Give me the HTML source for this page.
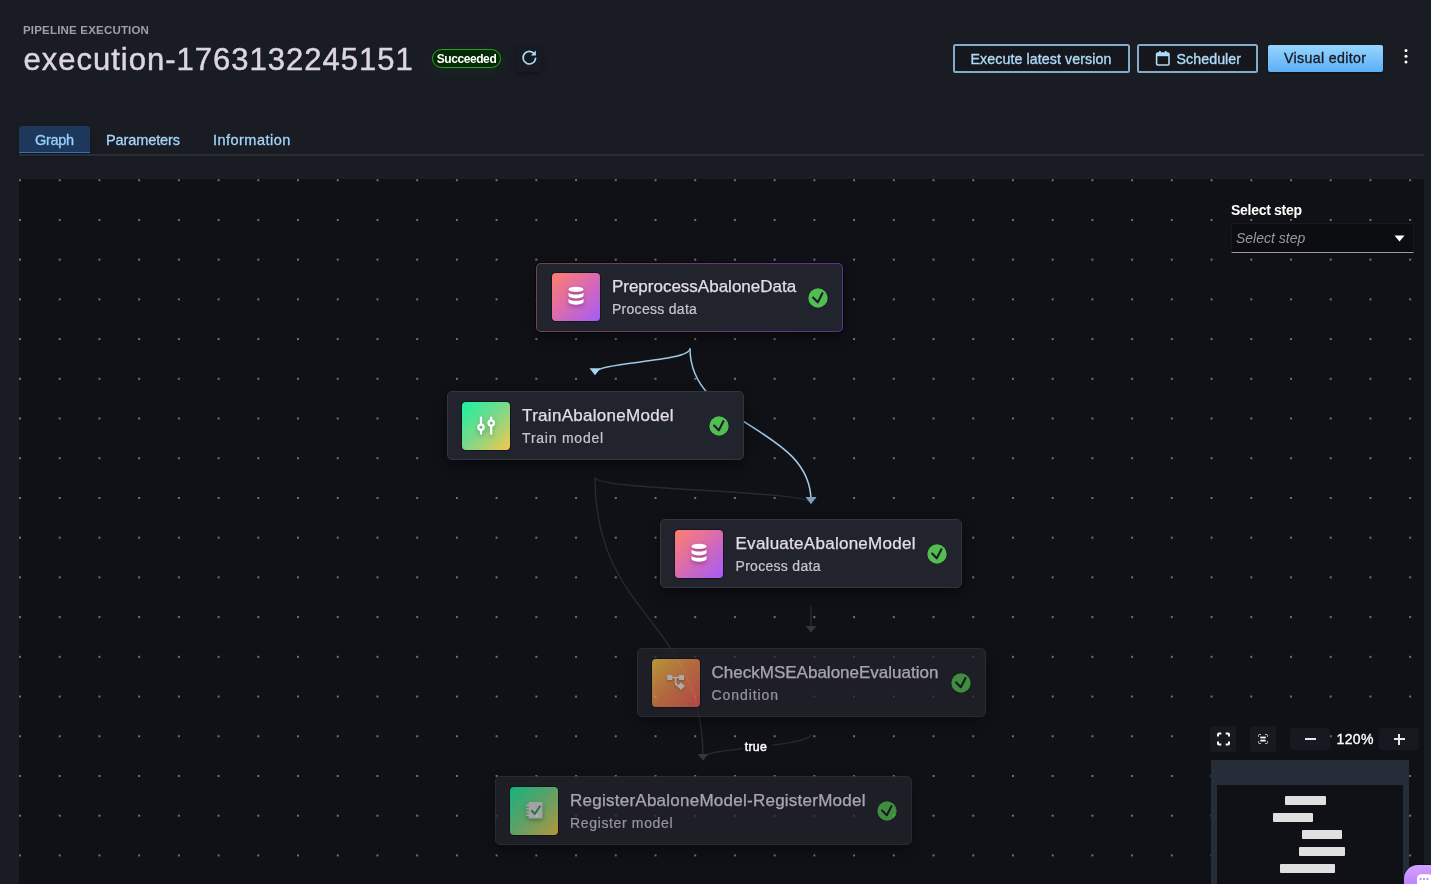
<!DOCTYPE html>
<html>
<head>
<meta charset="utf-8">
<title>Pipeline execution</title>
<style>
*{box-sizing:border-box;margin:0;padding:0}
html,body{width:1431px;height:884px;overflow:hidden;background:#1a1c24;font-family:"Liberation Sans",sans-serif;}
.abs{position:absolute}
#root{will-change:transform;position:relative;width:1431px;height:884px;overflow:hidden;background:#1a1c24}
.eyebrow{left:23px;top:22.5px;font-size:11.5px;font-weight:bold;color:#a29daa;letter-spacing:.19px;line-height:14px;white-space:nowrap}
.title{left:23.5px;top:41px;font-size:31px;line-height:38px;color:#dcd6e3;white-space:nowrap;letter-spacing:1.0px;-webkit-text-stroke:.45px #dcd6e3}
.badge{left:432px;top:49px;width:69px;height:19px;border:1.800px solid #2f9e2f;border-radius:10px;background:#032b03;color:#fff;font-size:12px;letter-spacing:-.42px;font-weight:bold;line-height:16px;padding-top:1.200px;text-align:center;box-shadow:0 4px 14px rgba(20,90,20,.18)}
.refresh{left:516px;top:47px;width:26px;height:25px;background:#181a21;border-radius:3px;box-shadow:0 2px 4px rgba(0,0,0,.35)}
.btn{top:44px;height:29px;border:2px solid #84abc9;border-radius:2.5px;background:#15171d;color:#addaf8;font-size:14.2px;line-height:26px;white-space:nowrap;-webkit-text-stroke:.35px #addaf8}
.btn span{position:absolute;top:0.2px}
.btnp{left:1268px;top:45px;width:114.500px;height:26.500px;border-radius:2px;background:linear-gradient(#96d5ff,#5cb0f5);color:#14171d;-webkit-text-stroke:.3px #14171d;font-size:14.2px;line-height:26px;white-space:nowrap;box-shadow:0 1px 2px rgba(0,0,0,.5)}
.tab{top:126px;height:28px;font-size:14.500px;line-height:28px;color:#a4d6fb;white-space:nowrap;-webkit-text-stroke:.3px #a4d6fb}
.tabline{left:19px;top:154.400px;width:1405px;height:1.600px;background:#2b2d34}
#canvas{left:19px;top:179px;width:1405px;height:705px;background-color:#101116;overflow:hidden;
 background-image:radial-gradient(circle,#8a8893 0,#8a8893 .6px,rgba(138,136,147,0) 1.1px);
 background-size:39.72px 39.72px;background-position:-18.86px -18.66px}
.node{position:absolute;height:69px;border:1.400px solid #33353f;border-radius:5px;background:#22242d;box-shadow:0 6px 14px rgba(0,0,0,.45)}
.node .ic{position:absolute;left:14.400px;top:9.600px;width:48px;height:48px;border-radius:4px;box-shadow:0 0 0 1px rgba(10,12,18,.55)}
.node .t{position:absolute;left:74.500px;top:12.400px;font-size:17px;line-height:22px;color:#e2dde8;white-space:nowrap;-webkit-text-stroke:.25px #e2dde8}
.node .s{position:absolute;left:74.500px;top:36.500px;font-size:14px;line-height:18px;color:#c9c5d0;white-space:nowrap;letter-spacing:.3px;-webkit-text-stroke:.2px #c9c5d0}
.node .ck{position:absolute;top:24.100px;width:20px;height:20px}
.dim{opacity:.72}
.g-proc{background:linear-gradient(135deg,#ff7f6d 0%,#dd6cab 45%,#a35bfa 100%)}
.g-train{background:linear-gradient(135deg,#17f2a3 0%,#7ed888 50%,#f6c84a 100%)}
.g-cond{background:linear-gradient(135deg,#f7c948 0%,#f08a4e 50%,#ee5a5a 100%)}
.mm{height:9px;background:#e0e0e0;border-radius:1px}
</style>
</head>
<body>
<div id="root">
  <div class="abs eyebrow">PIPELINE EXECUTION</div>
  <div class="abs title">execution-1763132245151</div>
  <div class="abs badge">Succeeded</div>
  <div class="abs refresh">
    <svg style="position:absolute;left:0;top:-.7px" width="26" height="25" viewBox="0 0 26 25"><path d="M18.6 8.2 A6.3 6.3 0 1 0 19.6 12.4" fill="none" stroke="#a9d9fa" stroke-width="1.7" stroke-linecap="round"/><path d="M19.9 4.6 L19.9 9.6 L14.9 9.6 Z" fill="#a9d9fa"/></svg>
  </div>

  <div class="abs btn" style="left:953px;width:177px"><span style="left:15.500px;letter-spacing:.1px">Execute latest version</span></div>
  <div class="abs btn" style="left:1137px;width:121px">
    <svg class="abs" style="left:16px;top:3.500px" width="16" height="17" viewBox="0 0 16 17"><rect x="1.6" y="3" width="12.4" height="12" rx="1.2" fill="none" stroke="#addaf8" stroke-width="1.6"/><rect x="1.6" y="3" width="12.4" height="3.2" fill="#addaf8"/><rect x="4" y="1" width="1.8" height="3" fill="#addaf8"/><rect x="9.8" y="1" width="1.8" height="3" fill="#addaf8"/></svg>
    <span style="left:37.500px;letter-spacing:.08px">Scheduler</span></div>
  <div class="abs btnp"><span class="abs" style="left:16px;top:.4px;letter-spacing:.34px">Visual editor</span></div>
  <svg class="abs" style="left:1402px;top:46.500px" width="8" height="18" viewBox="0 0 8 18"><circle cx="4" cy="3.4" r="1.5" fill="#fff"/><circle cx="4" cy="9.2" r="1.5" fill="#fff"/><circle cx="4" cy="15" r="1.5" fill="#fff"/></svg>

  <div class="abs" style="left:19px;top:125.700px;width:71px;height:27.600px;background:#1d385a;border-bottom:1.600px solid #2f72b8;border-radius:3px 3px 0 0;box-shadow:0 3px 6px rgba(0,0,0,.25)"></div>
  <div class="abs tab" style="left:35px;letter-spacing:-.33px;color:#98d2fd;-webkit-text-stroke:.3px #98d2fd">Graph</div>
  <div class="abs tab" style="left:106px;letter-spacing:-.1px">Parameters</div>
  <div class="abs tab" style="left:213px;letter-spacing:.47px">Information</div>
  <div class="abs tabline"></div>

  <div class="abs" id="canvas">
    <svg class="abs" style="left:0;top:0" width="1405" height="705" viewBox="19 179 1405 705" fill="none">
      <g stroke="#272932" stroke-width="1.400">
        <path d="M595,477.5 C595,490.5 811,490.5 811,503"/>
        <path d="M595,477.5 C595,619 703,619 703,758"/>
        <path d="M811,605.5 L811,628"/>
        <path d="M811,734 C811,747.2 703,747.2 703,758"/>
      </g>
      <g fill="#343641">
        <path d="M697.5,754 L708.5,754 L703,760.5 Z"/>
        <path d="M805.5,626 L816.5,626 L811,632.5 Z"/>
      </g>
      <g stroke="#9dc9e6" stroke-width="1.5">
        <path d="M690,348.400 C690,362 595,362 595,373"/>
        <path d="M690,348.400 C690,426.200 811,426.200 811,501"/>
      </g>
      <path d="M589.500,368.300 L600.500,368.300 L595,375.200 Z" fill="#a6d4f2"/>
      <path d="M805.500,497 L816.500,497 L811,504.200 Z" fill="#7f9fb8"/>
    </svg>
    <div class="abs" style="left:724px;top:559.600px;width:28.500px;height:16px;background:#101116;color:#fff;font-size:12.300px;-webkit-text-stroke:.45px #fff;letter-spacing:.25px;line-height:16px;padding-left:1.800px">true</div>
    <div class="node" style="left:517.400px;top:83.800px;width:306.600px;border:1.400px solid transparent;background:linear-gradient(#22242d,#22242d) padding-box,linear-gradient(100deg,#7a4243,#6a3a6e 55%,#5c3787) border-box;box-shadow:0 0 0 1px rgba(2,6,12,.7),0 6px 14px rgba(0,0,0,.45);"><div class="ic g-proc"><svg class="abs" style="left:0;top:0;filter:drop-shadow(0 2px 2px rgba(90,20,90,.45))" width="48" height="48" viewBox="0 0 48 48"><g fill="#fff"><ellipse cx="24" cy="16.400" rx="7.500" ry="2.700"/><path d="M16.500 19.500 C18 22.300 30 22.300 31.500 19.500 L31.500 23 C30 26.200 18 26.200 16.500 23 Z"/><path d="M16.500 25.700 C18 28.500 30 28.500 31.500 25.700 L31.500 29.300 C30 32.500 18 32.500 16.500 29.300 Z"/></g></svg></div><div class="t">PreprocessAbaloneData</div><div class="s">Process data</div><svg class="ck" style="right:13.900px;overflow:visible" viewBox="0 0 20 20"><circle cx="10" cy="10" r="10.300" fill="#1b1d27"/><circle cx="10" cy="10" r="9.700" fill="#52bd50"/><path d="M5.100 9.500 L9.800 14.300 L14.400 5.200" fill="none" stroke="#1c1e2a" stroke-width="2.100" stroke-linecap="round" stroke-linejoin="round"/></svg></div>
    <div class="node" style="left:427.600px;top:212.300px;width:297px;"><div class="ic g-train"><svg class="abs" style="left:0;top:0;filter:drop-shadow(0 2px 2px rgba(20,90,40,.4))" width="48" height="48" viewBox="0 0 48 48"><g stroke="#fff" stroke-width="2.300" fill="none" stroke-linecap="round"><path d="M19 15.700 V22.600 M19 28 V31.700"/><circle cx="19" cy="25.300" r="2.650"/><path d="M29.200 15.700 V18.400 M29.200 23.800 V31.700"/><circle cx="29.200" cy="21.100" r="2.650"/></g></svg></div><div class="t" style="letter-spacing:.29px">TrainAbaloneModel</div><div class="s" style="letter-spacing:.76px">Train model</div><svg class="ck" style="right:13.900px;overflow:visible" viewBox="0 0 20 20"><circle cx="10" cy="10" r="10.300" fill="#1b1d27"/><circle cx="10" cy="10" r="9.700" fill="#52bd50"/><path d="M5.100 9.500 L9.800 14.300 L14.400 5.200" fill="none" stroke="#1c1e2a" stroke-width="2.100" stroke-linecap="round" stroke-linejoin="round"/></svg></div>
    <div class="node" style="left:641px;top:340.3px;width:302px;"><div class="ic g-proc"><svg class="abs" style="left:0;top:0;filter:drop-shadow(0 2px 2px rgba(90,20,90,.45))" width="48" height="48" viewBox="0 0 48 48"><g fill="#fff"><ellipse cx="24" cy="16.400" rx="7.500" ry="2.700"/><path d="M16.500 19.500 C18 22.300 30 22.300 31.500 19.500 L31.500 23 C30 26.200 18 26.200 16.500 23 Z"/><path d="M16.500 25.700 C18 28.500 30 28.500 31.500 25.700 L31.500 29.300 C30 32.500 18 32.500 16.500 29.300 Z"/></g></svg></div><div class="t" style="letter-spacing:.27px">EvaluateAbaloneModel</div><div class="s">Process data</div><svg class="ck" style="right:13.900px;overflow:visible" viewBox="0 0 20 20"><circle cx="10" cy="10" r="10.300" fill="#1b1d27"/><circle cx="10" cy="10" r="9.700" fill="#52bd50"/><path d="M5.100 9.500 L9.800 14.300 L14.400 5.200" fill="none" stroke="#1c1e2a" stroke-width="2.100" stroke-linecap="round" stroke-linejoin="round"/></svg></div>
    <div class="node dim" style="left:618.300px;top:469.300px;width:348.800px;height:68.300px;"><div class="ic g-cond" style="left:13.300px;top:9.400px"><svg class="abs" style="left:0;top:0;filter:drop-shadow(0 1px 1px rgba(90,30,20,.4))" width="48" height="48" viewBox="0 0 48 48"><g fill="#e8e6e6"><rect x="15.200" y="16" width="5" height="5" rx=".5"/><rect x="27" y="16" width="5" height="5" rx=".5"/><rect x="26.300" y="24.500" width="5.400" height="5.400" rx=".5" transform="rotate(45 29 27.200)"/></g><path d="M20 18.500 H27 M23.600 18.500 V23.500 Q23.600 26.600 27 26.900" fill="none" stroke="#e8e6e6" stroke-width="1.700"/></svg></div><div class="t" style="left:73.300px">CheckMSEAbaloneEvaluation</div><div class="s" style="left:73.300px;letter-spacing:.9px">Condition</div><svg class="ck" style="right:13.900px;overflow:visible" viewBox="0 0 20 20"><circle cx="10" cy="10" r="10.300" fill="#1b1d27"/><circle cx="10" cy="10" r="9.700" fill="#52bd50"/><path d="M5.100 9.500 L9.800 14.300 L14.400 5.200" fill="none" stroke="#1c1e2a" stroke-width="2.100" stroke-linecap="round" stroke-linejoin="round"/></svg></div>
    <div class="node dim" style="left:475.500px;top:597.300px;width:417.500px;"><div class="ic g-train"><svg class="abs" style="left:0;top:0;filter:drop-shadow(0 2px 2px rgba(10,60,30,.4))" width="48" height="48" viewBox="0 0 48 48"><g fill="#dcdcdc"><rect x="18.600" y="15" width="13.800" height="16.400" rx="1.200"/><rect x="16" y="17.600" width="3.500" height="1.700" rx=".6"/><rect x="16" y="20.800" width="3.500" height="1.700" rx=".6"/><rect x="16" y="24" width="3.500" height="1.700" rx=".6"/><rect x="16" y="27.200" width="3.500" height="1.700" rx=".6"/></g><path d="M21.300 23.300 L24.800 27 L30.300 18.700" fill="none" stroke="#2e9a4a" stroke-width="2"/></svg></div><div class="t" style="letter-spacing:.25px">RegisterAbaloneModel-RegisterModel</div><div class="s" style="letter-spacing:.65px">Register model</div><svg class="ck" style="right:13.900px;overflow:visible" viewBox="0 0 20 20"><circle cx="10" cy="10" r="10.300" fill="#1b1d27"/><circle cx="10" cy="10" r="9.700" fill="#52bd50"/><path d="M5.100 9.500 L9.800 14.300 L14.400 5.200" fill="none" stroke="#1c1e2a" stroke-width="2.100" stroke-linecap="round" stroke-linejoin="round"/></svg></div>
    <div class="abs" style="left:1212px;top:22.800px;font-size:14px;font-weight:bold;color:#fff;line-height:16px;white-space:nowrap;letter-spacing:-.29px">Select step</div>
    <div class="abs" style="left:1212px;top:44px;width:183px;height:29.500px;background:#0b0d11;border:1px solid #17191f;border-bottom:1.400px solid #9d97a6;border-radius:2px 2px 0 0"><span class="abs" style="left:4px;top:5px;font-size:14px;font-style:italic;color:#9a96a2;line-height:18px;white-space:nowrap">Select step</span><svg class="abs" style="left:162px;top:10.500px" width="11" height="7" viewBox="0 0 11 7"><path d="M0.500 0.500 L10.500 0.500 L5.500 6.500 Z" fill="#fff"/></svg></div>

    <div class="abs" style="left:1191.400px;top:547px;width:25.600px;height:26px;background:#171920;border-radius:3px"><svg style="position:absolute;left:.6px;top:0" width="25" height="26" viewBox="0 0 25 26"><path d="M7 10.500 V8.500 Q7 7.500 8 7.500 H10.300 M14.700 7.500 H17 Q18 7.500 18 8.500 V10.500 M18 15.500 V17.500 Q18 18.500 17 18.500 H14.700 M10.300 18.500 H8 Q7 18.500 7 17.500 V15.500" fill="none" stroke="#fff" stroke-width="2"/></svg></div>
    <div class="abs" style="left:1231px;top:547px;width:26px;height:26px;background:#171920;border-radius:3px"><svg width="26" height="26" viewBox="0 0 26 26"><path d="M8.500 10.700 V9.500 Q8.500 8.500 9.500 8.500 H10.800 M15.200 8.500 H16.500 Q17.500 8.500 17.500 9.500 V10.700 M17.500 15.300 V16.500 Q17.500 17.500 16.500 17.500 H15.200 M10.800 17.500 H9.500 Q8.500 17.500 8.500 16.500 V15.300" fill="none" stroke="#d8d8dc" stroke-width="1"/><rect x="10.300" y="10.600" width="5.400" height="1.800" fill="#fff"/><rect x="10.300" y="13.700" width="5.400" height="1.800" fill="#fff"/></svg></div>
    <div class="abs" style="left:1271px;top:549px;width:40px;height:22px;background:#171920;border-radius:3px"><div class="abs" style="left:14.500px;top:10.200px;width:11px;height:1.600px;background:#e8e8ec"></div></div>
    <div class="abs" style="left:1317.500px;top:551px;font-size:14px;color:#fff;line-height:18px;white-space:nowrap;-webkit-text-stroke:.35px #fff;letter-spacing:.4px">120%</div>
    <div class="abs" style="left:1360px;top:549px;width:40px;height:22px;background:#171920;border-radius:3px"><div class="abs" style="left:14.500px;top:10.200px;width:11px;height:1.600px;background:#e8e8ec"></div><div class="abs" style="left:19.200px;top:5.500px;width:1.600px;height:11px;background:#e8e8ec"></div></div>

    <div class="abs" style="left:1191.500px;top:581px;width:198.500px;height:130px;background:#252d39"></div>
    <div class="abs" style="left:1198px;top:606px;width:186px;height:110px;background:#101116"></div>
    <div class="abs mm" style="left:1266px;top:617px;width:41px"></div>
    <div class="abs mm" style="left:1254px;top:634px;width:40px"></div>
    <div class="abs mm" style="left:1282.500px;top:651px;width:40.500px"></div>
    <div class="abs mm" style="left:1279.500px;top:668px;width:46.600px"></div>
    <div class="abs mm" style="left:1260.700px;top:685px;width:55.800px"></div>
  </div>
<div class="abs" style="left:1404px;top:864.800px;width:44px;height:44px;border-radius:14px;background:linear-gradient(175deg,#d3a6ff 0%,#c287ff 35%,#b06aff 100%);box-shadow:0 0 0 1px rgba(5,10,15,.6)"><svg class="abs" style="left:0;top:0" width="44" height="44" viewBox="0 0 44 44"><rect x="13" y="9.200" width="16" height="12.500" rx="4.200" fill="#fff"/><circle cx="16.600" cy="14" r="1.050" fill="#b57aff"/><circle cx="20" cy="14" r="1.050" fill="#b57aff"/><circle cx="23.500" cy="14" r="1.050" fill="#b57aff"/></svg></div>
</div>
</body>
</html>
